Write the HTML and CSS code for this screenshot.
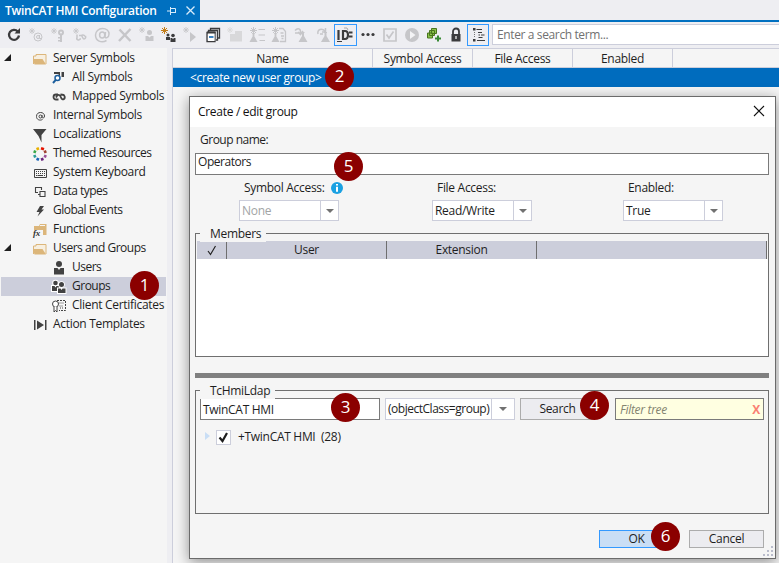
FILE: index.html
```
<!DOCTYPE html>
<html lang="en">
<head>
<meta charset="utf-8">
<title>TwinCAT HMI Configuration</title>
<link rel="stylesheet" href="styles.css">
</head>
<body>
<svg class="defs" width="0" height="0">
  <defs>
    <symbol id="star" viewBox="0 0 7 7"><path d="M3.500 0v7M0 3.500h7M1 1l5 5M6 1l-5 5" stroke="currentColor" stroke-width="1"/></symbol>
    <symbol id="folder" viewBox="0 0 16 16"><path d="M1.500 13V5h2.500V3.500h10V13" fill="#f7efe0" stroke="#dcb67a"/><path d="M1 8h9.500l3.500 5.500H2.500z" fill="#dcb67a"/></symbol>
    <symbol id="person" viewBox="0 0 16 16"><circle cx="8" cy="4" r="3"/><path d="M3 8h3.500L8 10l1.500-2H13v6.500H3z"/></symbol>
    <symbol id="flask" viewBox="0 0 9 10"><path d="M3 0h3v1H5.500v3L9 10H0l3.500-6V1H3z"/></symbol>
  </defs>
</svg>

<header class="tabs"><div class="tab"><span>TwinCAT HMI Configuration</span>
  <svg class="pin" width="9" height="8" viewBox="0 0 9 8"><path d="M0 4h3M3.500 0v8M4 1.500h4.500v4M4 5.500h5" fill="none" stroke="#d7ebfa"/></svg>
  <svg width="9" height="9" viewBox="0 0 9 9"><path d="M.5.5l8 8M8.500.5l-8 8" stroke="#d7ebfa" stroke-width="1.300"/></svg></div></header>

<nav class="toolbar">
  <i class="tool dark"><svg viewBox="0 0 16 16"><path d="M11.800 4.500A5 5 0 1 0 13 8.500" fill="none" stroke="currentColor" stroke-width="2.300"/><path d="M8.500 6.500h5.500V1z"/></svg></i>
  <i class="tool"><svg viewBox="0 0 16 16"><use href="#star" x="1" y="1" width="6" height="6"/><circle cx="10" cy="10" r="4" fill="none" stroke="currentColor"/><circle cx="10" cy="10" r="1.500" fill="none" stroke="currentColor"/><path d="M11.500 8v3.500h2" fill="none" stroke="currentColor"/></svg></i>
  <i class="tool"><svg viewBox="0 0 16 16"><use href="#star" x="1" y="1" width="6" height="6"/><circle cx="11" cy="5.500" r="2" fill="none" stroke="currentColor" stroke-width="2"/><path d="M10 8h2v7h-2zM8 10h3v1.500H8zM8 13h3v1.500H8z"/></svg></i>
  <i class="tool"><svg viewBox="0 0 16 16"><use href="#star" x="1" y="1" width="6" height="6"/><path d="M5 7.500v3a1.500 1.500 0 0 0 3 1.500h1M7 8.500h2c1.500 0 1.500 3.500 3 3.500s2-1.500 1.500-3M9 9c2-2 5-.5 4.500 2" fill="none" stroke="currentColor" stroke-width="1.500"/></svg></i>
  <i class="tool"><svg viewBox="0 0 16 16"><path d="M12.500 13.500c-5 3-11 .5-11-5.500C1.500 4.500 4.500 1.500 8.500 1.500s6.500 2.300 6.500 5.500c0 4-4 5-4 2.500l.5-4.500" fill="none" stroke="currentColor" stroke-width="1.500"/><ellipse cx="8.200" cy="8" rx="2.600" ry="3" fill="none" stroke="currentColor" stroke-width="1.500"/></svg></i>
  <i class="tool"><svg viewBox="0 0 16 16"><path d="M2.500 2.500l11 11.500M13.500 2L2 14" stroke="currentColor" stroke-width="2.500"/></svg></i>
  <i class="tool"><svg viewBox="0 0 16 16"><use href="#star" x="0" y="0" width="6" height="6"/><circle cx="10.500" cy="5.500" r="2.500"/><path d="M6.500 9H9l1.500 1.500L12 9h2.500v5h-8z"/></svg></i>
  <i class="tool dark"><svg viewBox="0 0 16 16"><use href="#star" x="0" y="0" width="7" height="7" class="amber"/><circle cx="7" cy="8" r="1.500"/><path d="M5 10h4v3H5z"/><circle cx="12" cy="8.500" r="1.800"/><path d="M9.500 11H11l1 1 1-1h1.500v4h-5z"/></svg></i>
  <i class="tool"><svg viewBox="0 0 16 16"><use href="#star" x="0" y="0" width="6" height="6"/><path d="M7 5l6 5-6 5z"/></svg></i>
  <i class="tool dark"><svg viewBox="0 0 16 16"><path d="M5.500 3V1.500h9V11H13M3.500 5V3.500h9V13H11M2 5.500h8v9H2z" fill="none" stroke="currentColor" stroke-width="1.300"/><path d="M3 6h6.500v8H3z" fill="#fff"/><path d="M4 10h4.500" stroke="#005aab" stroke-width="1.500"/><path d="M2 5.500h8.500" stroke="currentColor" stroke-width="2"/></svg></i>
  <i class="tool faint"><svg viewBox="0 0 16 16"><use href="#star" x="0" y="0" width="6" height="6"/><path d="M3 7h5V4h7v10.500H3z"/></svg></i>
  <i class="tool"><svg viewBox="0 0 16 16"><use href="#star" x="1" y="0" width="7" height="7"/><use href="#flask" x="0" y="6" width="9" height="9"/><path d="M9.500 2.500H16M9.500 8H16M10.500 13.500H16" stroke="currentColor"/></svg></i>
  <i class="tool"><svg viewBox="0 0 16 16"><use href="#star" x="1" y="0" width="7" height="7"/><use href="#flask" x="0" y="6" width="9" height="9"/><path d="M8 1.500h4l2.500 3v10H9M9.500 6h3M10 9h3M10.500 11.500h2" fill="none" stroke="currentColor" stroke-width="1.300"/></svg></i>
  <i class="tool"><svg viewBox="0 0 16 16"><path d="M2 3.500C5 0 8 2 7.500 6M10 4L7.500 7.500 5 5M2 6h5" fill="none" stroke="currentColor" stroke-width="1.500"/><use href="#flask" x="5" y="5" width="10" height="10"/></svg></i>
  <i class="tool"><svg viewBox="0 0 16 16"><path d="M3 7C2 2 7 1 10 4M10.500 1v4H7M5 7h3" fill="none" stroke="currentColor" stroke-width="1.500"/><use href="#flask" x="6" y="5" width="9" height="10"/></svg></i>
  <i class="tool dark pressed id"><svg viewBox="0 0 20 20"><path d="M3.500 5v10M8 5v10M8 6h2q3 0 3 4t-3 4H8" fill="none" stroke="currentColor" stroke-width="2.200"/><path d="M2 16.500h5" stroke="currentColor"/><path d="M14 7.500h3.500M14 11.500h3.500" stroke="currentColor" stroke-width="2"/><path d="M9 3l3 0 1 2" fill="none" stroke="#aaa"/></svg></i>
  <i class="tool dark dots"><svg viewBox="0 0 16 16"><circle cx="3" cy="7.500" r="1.600"/><circle cx="8" cy="7.500" r="1.600"/><circle cx="13" cy="7.500" r="1.600"/></svg></i>
  <i class="tool"><svg viewBox="0 0 16 16"><path d="M2 2h12v12H2zM4.500 7.500L7 11l4.500-6.500" fill="none" stroke="currentColor" stroke-width="1.700"/></svg></i>
  <i class="tool"><svg viewBox="0 0 16 16"><circle cx="8" cy="8" r="7"/><path d="M6 4l5.500 4L6 12z" fill="#f3f3f5"/></svg></i>
  <i class="tool"><svg viewBox="0 0 16 16"><path d="M5.500 1.500h5v5h-5zM3.500 3.500h5v5h-5zM1.500 6h5v5h-5z" fill="#8bc34a" stroke="#49751f"/><path d="M12 8.500v6M9 11.500h6" stroke="#388a34" stroke-width="2"/></svg></i>
  <i class="tool dark"><svg viewBox="0 0 16 16"><path d="M5 8V4.500a3 3 0 0 1 6 0V8" fill="none" stroke="currentColor" stroke-width="1.800"/><path d="M3.500 7h9v7.500h-9z"/><path d="M8 9v3" stroke="#eee" stroke-width="1.300"/></svg></i>
  <i class="tool dark pressed"><svg viewBox="0 0 16 16"><path d="M3 1h2.500v2.500H3zM3 12h2.500v2.500H3z"/><path d="M6.500 2.500H12M8 5.500h4M8.500 8h1.500M11 8h3.500M8.500 10.500h4M7 13.500h8" stroke="currentColor" stroke-width="1.200"/><path d="M4.500 5v6" stroke="#777" stroke-dasharray="1 1"/></svg></i>
  <div class="search">Enter a search term...</div>
</nav>

<main class="work">
  <aside class="tree">
    <div class="node open"><svg viewBox="0 0 16 16"><use href="#folder"/></svg><span>Server Symbols</span></div>
    <div class="node sub"><svg viewBox="0 0 16 16"><path d="M3 2h6v4H7.500V4H3zM10.500 2H13v5h-2.500z"/><circle cx="6.500" cy="8" r="2.500" fill="#fff" stroke="#1c5f9e" stroke-width="1.500"/><path d="M4.800 9.800L2 13" stroke="#1c5f9e" stroke-width="2"/></svg><span>All Symbols</span></div>
    <div class="node sub"><svg viewBox="0 0 16 16"><path d="M7 5.500H5a2.500 2.500 0 0 0 0 5h2.500M5 8.500c1.500-3 3.500-4 5 0s4.500 1 3.500-1.500c-.5-1.500-2-1.500-4-1.500" fill="none" stroke="currentColor" stroke-width="1.800"/></svg><span>Mapped Symbols</span></div>
    <div class="node"><svg viewBox="0 0 16 16"><path d="M10.500 11.500C7.500 13 4.500 11.500 4.500 8.500s2-4 4-4c2.500 0 4 1.500 4 3.500 0 2.500-2.500 2.500-2.500 1V7" fill="none" stroke="currentColor"/><circle cx="8.500" cy="8.500" r="1.500" fill="none" stroke="currentColor"/></svg><span>Internal Symbols</span></div>
    <div class="node"><svg viewBox="0 0 16 16"><path d="M1 2h13.500L9.500 8v7.500L6.500 9z"/></svg><span>Localizations</span></div>
    <div class="node"><svg viewBox="0 0 16 16" class="wheel"><path d="M9 2.200l3 1.100" stroke="#e51400"/><path d="M12.700 4.500l1 2.500" stroke="#a04030"/><path d="M13.700 9l-1 2.500" stroke="#9b4f96"/><path d="M11.500 12.700L9 13.700" stroke="#68217a"/><path d="M7 13.700l-2.500-1" stroke="#1b65b7"/><path d="M3.300 11.500l-1-2.500" stroke="#2b9b96"/><path d="M2.300 7l1-2.500" stroke="#39a845"/><path d="M4.500 3.300L7 2.300" stroke="#e8b000"/></svg><span class="tight">Themed Resources</span></div>
    <div class="node"><svg viewBox="0 0 16 16"><path d="M2.500 4.500h12v8h-12z" fill="none" stroke="currentColor"/><path d="M4 6.500h9M4 8.500h9" stroke="currentColor" stroke-dasharray="1 1"/><path d="M4 10.500h1.500M6 10.500h5M12 10.500h1" stroke="currentColor"/></svg><span>System Keyboard</span></div>
    <div class="node"><svg viewBox="0 0 16 16"><path d="M6 8.500H3.500v-5h6V6M8 7.500h5v5H8zM6 10.500h2" fill="none" stroke="currentColor" stroke-width="1.100"/></svg><span class="tight">Data types</span></div>
    <div class="node"><svg viewBox="0 0 16 16"><path d="M8 3h4L9.500 6.500H12L5.500 13.500 7.500 9H4.500z"/></svg><span class="tight">Global Events</span></div>
    <div class="node"><svg viewBox="0 0 16 16"><path d="M2 4h5l1-2h6.500v11H2z" fill="#dcb67a"/><path d="M8 3.500h5" stroke="#f5f5f5"/><path d="M1 8h10v7H1z" fill="#f5f5f5"/><text x="1" y="14" class="fx">fx</text></svg><span>Functions</span></div>
    <div class="node open"><svg viewBox="0 0 16 16"><use href="#folder"/></svg><span class="tight">Users and Groups</span></div>
    <div class="node sub"><svg viewBox="0 0 16 16"><use href="#person"/></svg><span class="tight">Users</span></div>
    <div class="node sub selected"><svg viewBox="0 0 16 16"><circle cx="4.500" cy="4" r="3.300" fill="#fff"/><path d="M0 6h9v7H0z" fill="#fff"/><circle cx="4.500" cy="4" r="2.300"/><path d="M1 7h2.500l1 1.500 1-1.500H8v5H1z"/><circle cx="10.500" cy="5.500" r="3.300" fill="#fff"/><path d="M6 8.500h9.500V15H6z" fill="#fff"/><circle cx="10.500" cy="5.500" r="2.500"/><path d="M7 9.500h2.500l1 1.500 1-1.500H14.500V14H7z"/></svg><span class="tight">Groups</span></div>
    <div class="node sub"><svg viewBox="0 0 16 16"><path d="M6 2.500h8.500V12.500H8" fill="none" stroke="currentColor" stroke-dasharray="2 1"/><path d="M7.500 5h5M8.500 8h4M9 10h3" stroke="currentColor" stroke-dasharray="1 1"/><circle cx="4.500" cy="6" r="3" fill="#fff" stroke="currentColor"/><path d="M3 8.500V14L4.500 12.500 6 14V8.500" fill="#fff" stroke="currentColor"/></svg><span>Client Certificates</span></div>
    <div class="node"><svg viewBox="0 0 16 16"><path d="M2 3h1.500v10H2zM13 3h1.500v10H13zM5 3.500L12 8l-7 4.500z"/></svg><span>Action Templates</span></div>
  </aside>

  <section class="grid">
    <div class="cols"><b>Name</b><b>Symbol Access</b><b>File Access</b><b>Enabled</b></div>
    <div class="newrow">&lt;create new user group&gt;</div>
  </section>
</main>

<section class="dialog">
  <div class="title"><span>Create / edit group</span><svg width="12" height="12" viewBox="0 0 12 12"><path d="M1 1l10 10M11 1L1 11" stroke="#111" stroke-width="1.100"/></svg></div>
  <div class="body">
    <div class="label">Group name:</div>
    <div class="input name">Operators</div>
    <div class="access">
      <div class="field"><div class="caption"><span>Symbol Access:</span><svg width="12" height="12" viewBox="0 0 12 12"><circle cx="6" cy="6" r="6" fill="#1ba1e2"/><path d="M5 2h2v1.500H5zM5 4.800h2v5H5z" fill="#fff"/></svg></div><div class="combo disabled"><span>None</span><i></i></div></div>
      <div class="field"><div class="caption">File Access:</div><div class="combo"><span>Read/Write</span><i></i></div></div>
      <div class="field"><div class="caption">Enabled:</div><div class="combo"><span>True</span><i></i></div></div>
    </div>
    <div class="group members">
      <div class="legend">Members</div>
      <div class="mhead"><b><svg width="10" height="11" viewBox="0 0 10 11"><path d="M1 6l2.500 3.500L8.500 1" fill="none" stroke="#222" stroke-width="1.200"/></svg></b><b>User</b><b>Extension</b><b></b></div>
      <div class="mbody"></div>
    </div>
    <div class="splitter"></div>
    <div class="group ldap">
      <div class="legend">TcHmiLdap</div>
      <div class="query">
        <div class="input base">TwinCAT HMI</div>
        <div class="combo class"><span>(objectClass=group)</span><i></i></div>
        <div class="button search-btn">Search</div>
        <div class="input filter"><em>Filter tree</em><strong>X</strong></div>
      </div>
      <div class="result"><svg class="arrow" width="5" height="8" viewBox="0 0 5 8"><path d="M0 0l5 4-5 4z" fill="#c9def5"/></svg><div class="check"><svg width="13" height="13" viewBox="0 0 13 13"><path d="M2.500 6.500L5.500 10 10 2" fill="none" stroke="#1e1e1e" stroke-width="2.200"/></svg></div><span>+TwinCAT HMI&nbsp; (28)</span></div>
    </div>
    <div class="actions"><div class="button ok">OK</div><div class="button">Cancel</div></div>
  </div>
  <svg class="grip" width="12" height="12" viewBox="0 0 12 12"><path d="M9 1h2v2H9zM5 5h2v2H5zM9 5h2v2H9zM1 9h2v2H1zM5 9h2v2H5zM9 9h2v2H9z" fill="#b9bccb"/></svg>
</section>

<span class="badge n1">1</span><span class="badge n2">2</span><span class="badge n3">3</span><span class="badge n4">4</span><span class="badge n5">5</span><span class="badge n6">6</span>
</body>
</html>
```
FILE: styles.css
```
* { box-sizing: border-box; }
body {
  margin: 0; width: 779px; height: 563px; overflow: hidden; position: relative;
  background: #eeeef2; color: #1e1e1e;
  font: 12px/18px "Open Sans", "Noto Sans", sans-serif; letter-spacing: -0.3px;
}
.defs { position: absolute; }
svg { flex: none; display: block; }
b { font-weight: 400; }
i { font-style: normal; }

.tabs { height: 22px; border-bottom: 2px solid #0070c0; }
.tab {
  width: 200px; height: 20px; padding: 1px 0 0 5px; display: flex; align-items: center;
  background: #0070c0; color: #fff; font-weight: 600; letter-spacing: -0.32px;
}
.tab span { width: 162px; white-space: nowrap; }
.tab .pin { margin-right: 10px; }

.toolbar { height: 26px; display: flex; padding-left: 3px; align-items: flex-start; }
.tool { width: 22.1px; height: 26px; display: flex; align-items: center; justify-content: center; color: #c6c6c9; flex: none; }
.tool svg { width: 16px; height: 16px; fill: currentColor; }
.tool.dark { color: #3b3b3d; }
.tool.faint { color: #d8d8da; }
.tool.pressed { height: 22px; margin-top: 2px; border: 1px solid #3399ff; }
.tool.id svg { width: 20px; height: 20px; }
.tool .amber { color: #c27d1a; }
.search {
  flex: 1; height: 21px; margin: 2px 0 0 3px; padding-left: 4px; line-height: 20px;
  border: 1px solid #cccedb; border-right: 0; background: #fff; color: #717171; letter-spacing: -0.38px;
}

.work { display: flex; gap: 5px; height: 515px; }
.tree { width: 167px; padding: 1px 1px 0; background: #f5f5f5; }
.node { height: 19px; padding-left: 31px; display: flex; align-items: center; white-space: nowrap; position: relative; }
.node span { margin-top: -2px; }
.node .tight { letter-spacing: -0.5px; }
.node svg { width: 16px; height: 16px; margin-right: 5px; fill: currentColor; color: #424242; }
.node.sub { padding-left: 50px; }
.node.selected { background: #cccedb; }
.node.open::before { content: ""; position: absolute; left: 3px; top: 5px; border: solid transparent; border-width: 0 0 7px 7px; border-bottom-color: #1e1e1e; }
.wheel path { stroke-width: 2.6; }
.fx { font: italic bold 9px "Liberation Serif", serif; fill: #333; }

.grid { flex: 1; border-left: 1px solid #cccedb; background: #f5f5f5; }
.cols { height: 20px; display: flex; border: solid #cccedb; border-width: 1px 0; }
.cols b { width: 100px; border-right: 1px solid #cccedb; text-align: center; line-height: 20px; }
.cols b:first-child { width: 200px; }
.newrow { height: 19px; line-height: 20px; padding-left: 17px; background: #006cbe; color: #fff; letter-spacing: -0.35px; }

.dialog {
  position: absolute; left: 189px; top: 96px; width: 587px; height: 463px;
  border: 1px solid #6b6b6b; background: #f5f5f5; box-shadow: 0 3px 13px rgba(0,0,0,.42);
}
.title { height: 30px; padding: 0 10px 0 8px; display: flex; justify-content: space-between; align-items: center; background: #fff; color: #111; }
.title svg { margin-bottom: 2px; }
.body { padding: 4px 6px 0 5px; }
.label { height: 22px; line-height: 18px; padding: 0 5px; letter-spacing: -0.5px; }
.input { height: 22px; padding-left: 2px; border: 1px solid #7a7a7a; background: #fff; white-space: nowrap; }
.name { line-height: 15px; letter-spacing: -0.45px; }
.access { display: grid; grid-template-columns: 193px 191px 100px; padding: 4px 0 0 44px; height: 58px; }
.field { width: 100px; }
.caption { height: 21px; padding: 0 0 3px 5px; display: flex; align-items: center; white-space: nowrap; }
.caption svg { margin-left: 6px; }
.combo { height: 21px; display: flex; border: 1px solid #cccedb; background: #fff; line-height: 20px; }
.combo span { flex: 1; min-width: 0; padding-left: 2px; white-space: nowrap; }
.combo i { flex: none; width: 18px; border-left: 1px solid #cccedb; display: flex; align-items: center; justify-content: center; }
.combo i::before { content: ""; border: solid transparent; border-width: 4px 4px 0; border-top-color: #717171; }
.disabled { color: #a2a4a5; }
.group { border: 1px solid #6f6f6f; }
.legend { position: relative; width: max-content; height: 17px; line-height: 17px; margin: -9px 0 0 4px; padding: 0 5px 0 10px; background: #f5f5f5; }
.members { height: 124px; display: flex; flex-direction: column; }
.mhead { height: 18px; display: flex; margin: -1px 1px 0; background: #cccedb; flex: none; }
.mhead b { width: 160px; border-right: 1px solid #6f6f6f; text-align: center; line-height: 18px; }
.mhead b:first-child { width: 30px; display: flex; align-items: center; justify-content: center; }
.mhead b:nth-child(3) { width: 150px; }
.mhead b:last-child { width: auto; flex: 1; }
.mbody { flex: 1; background: #fff; }
.splitter { height: 5px; margin: 16px 0 12px; background: #808080; }
.ldap { height: 124px; }
.query { display: flex; margin: -1px 0 0 4px; }
.base { width: 180px; line-height: 22px; }
.class { width: 130px; height: 22px; margin: 0 5px; letter-spacing: -0.48px; }
.class i { width: 23px; }
.button { width: 75px; height: 18px; line-height: 16px; border: 1px solid #acacac; background: #ececf0; text-align: center; }
.search-btn { height: 22px; line-height: 20px; margin-right: 20px; }
.filter { width: 149px; padding: 0 3px 0 4px; display: flex; justify-content: space-between; background: #ffffe1; line-height: 21px; }
.filter em { color: #83836f; }
.filter strong { color: #fa8072; }
.result { display: flex; align-items: center; height: 18px; margin: 8px 0 0 9px; }
.arrow { margin: -3px 6px 0 0; }
.check { width: 15px; height: 15px; border: 1px solid #cccedb; background: #fff; margin-right: 7px; }
.actions { display: flex; justify-content: flex-end; gap: 15px; margin: 16px 5px 0 0; }
.ok { background: #c9def5; border-color: #3399ff; }
.grip { position: absolute; right: 1px; bottom: 1px; }

.badge {
  position: absolute; width: 29px; height: 29px; border-radius: 50%; background: #8b0000; color: #fff;
  font-size: 17px; line-height: 28px; text-align: center; letter-spacing: 0;
}
.n1 { left: 130px; top: 271px; }
.n2 { left: 325px; top: 62px; }
.n3 { left: 331px; top: 393px; }
.n4 { left: 580px; top: 391px; }
.n5 { left: 334px; top: 152px; }
.n6 { left: 651px; top: 522px; }
```
